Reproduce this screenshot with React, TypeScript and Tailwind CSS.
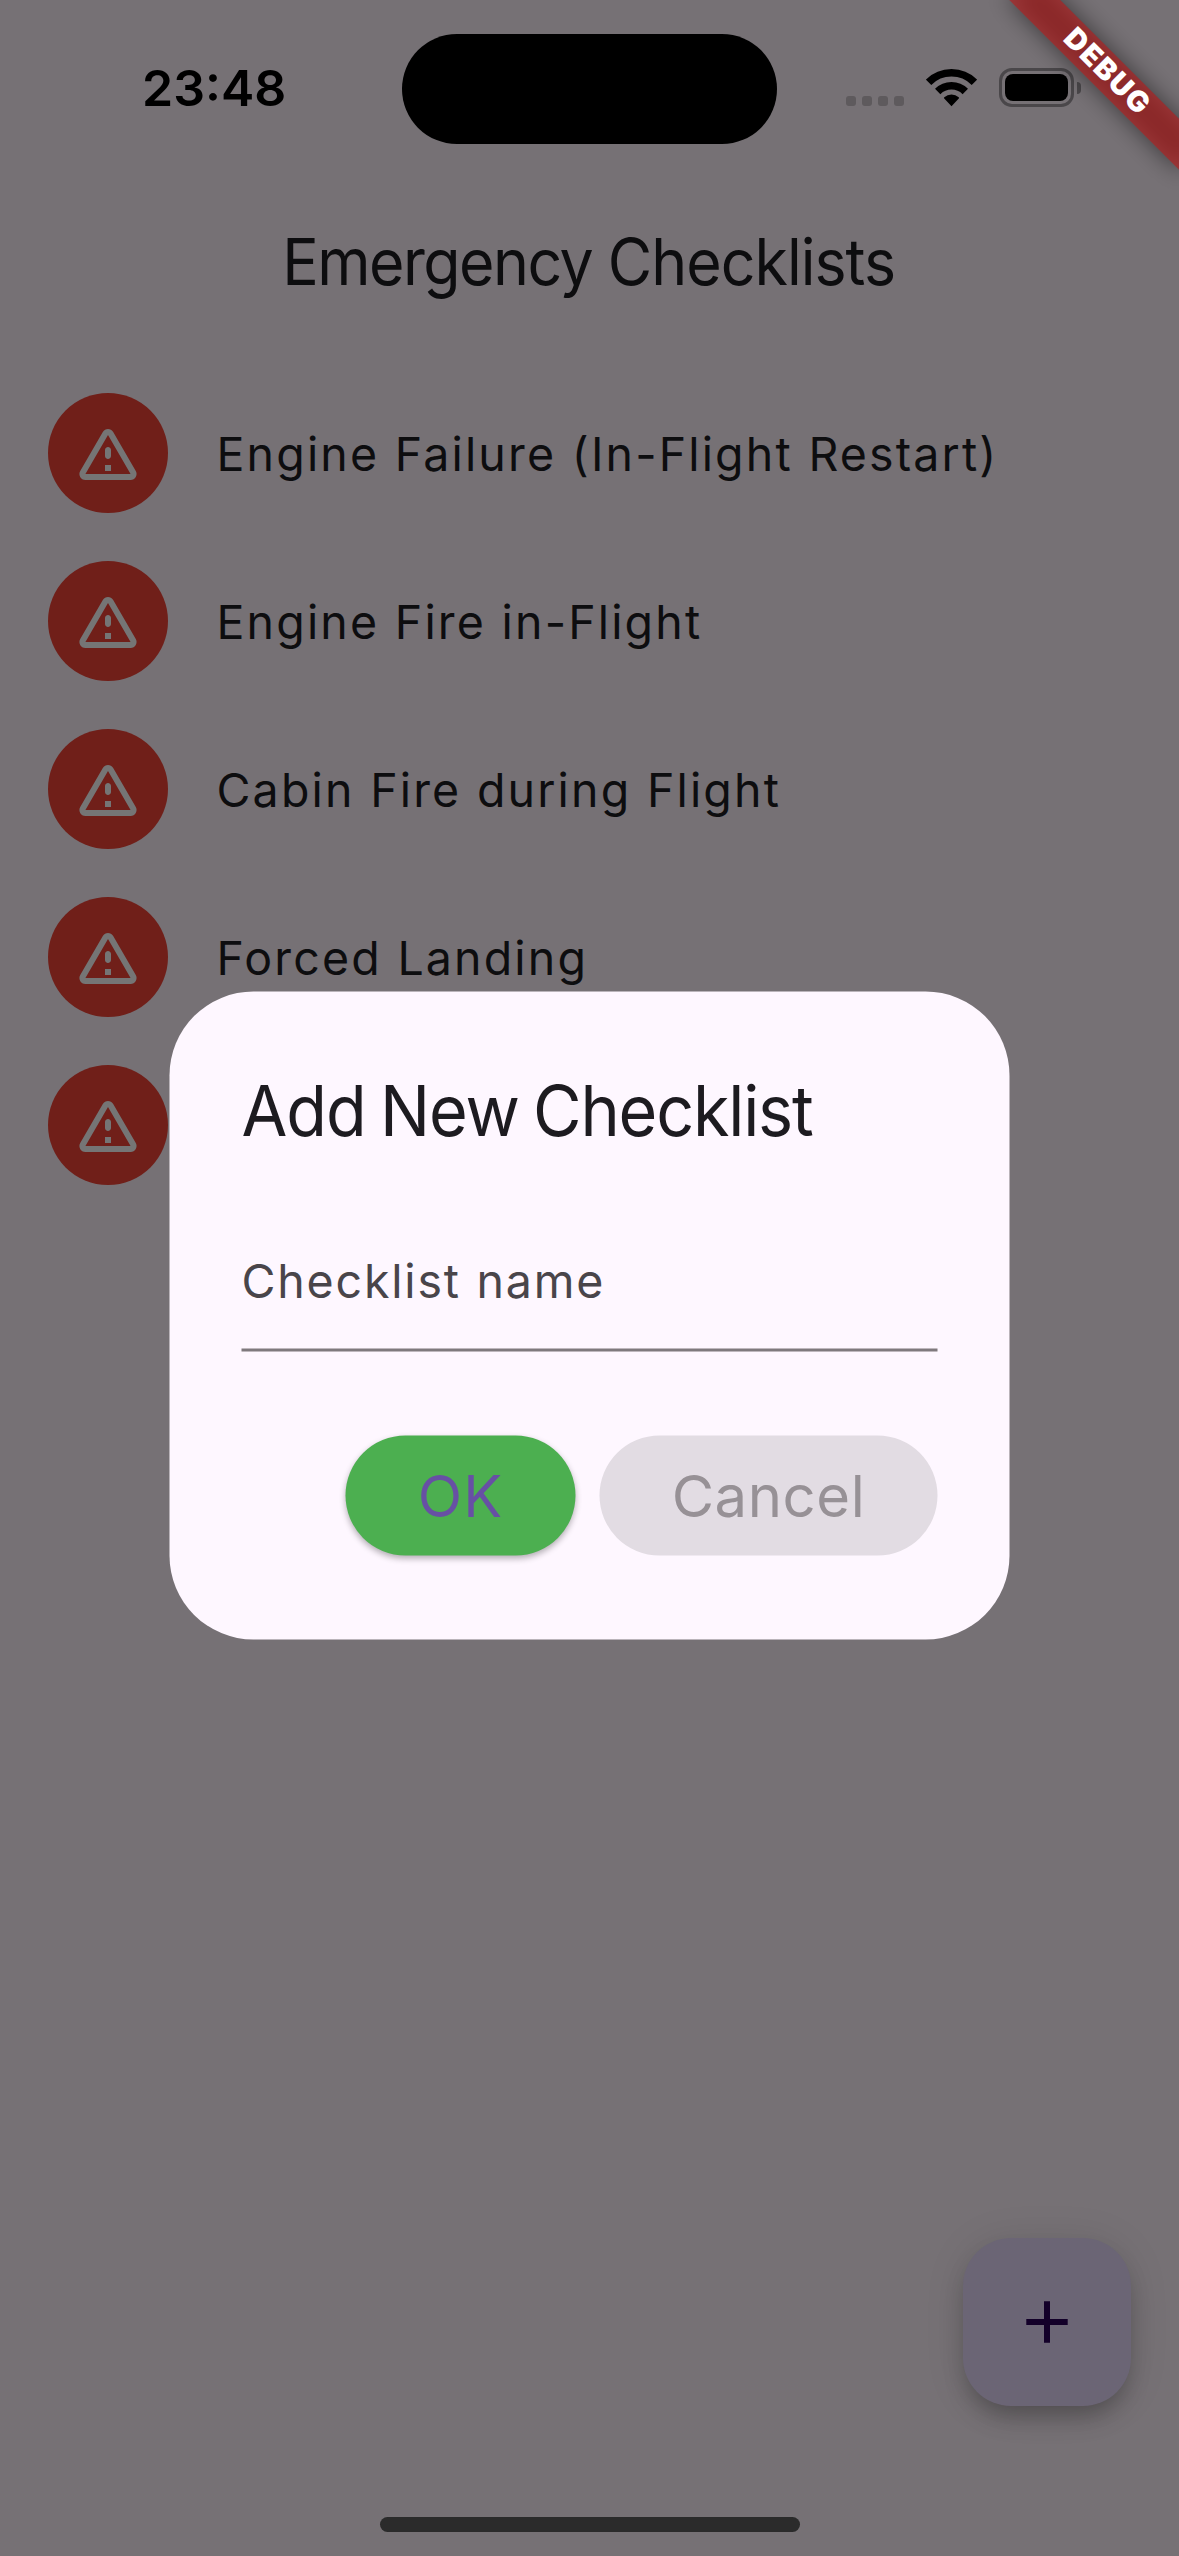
const checklists = [
  "Engine Failure (In-Flight Restart)",
  "Engine Fire in-Flight",
  "Cabin Fire during Flight",
  "Forced Landing",
  "",
];

function StatusBar() {
  return (
    <header className="flex h-[177px] shrink-0 items-start">
      <div className="w-[402px] pl-[142px] pt-[57px]">
        <span className="text-[50px] font-semibold leading-[62px] text-black">23:48</span>
      </div>
      <div className="mt-[34px] h-[110px] w-[375px] rounded-full bg-black" />
      <div className="flex items-start pl-[69px] pt-[68px]">
        <div className="flex gap-1.5 pt-7">
          {[0, 1, 2, 3].map((i) => (
            <span key={i} className="size-2.5 rounded-[3px] bg-[#5e5a5d]" />
          ))}
        </div>
        <svg className="ml-[22px] h-[39px] w-[51px]" viewBox="0 0 51 39" fill="none">
          <path d="M2.6 14.3a32.4 32.4 0 0 1 45.8 0" stroke="#000" strokeWidth="7.6" />
          <path d="M11.7 23.5a19.6 19.6 0 0 1 27.6 0" stroke="#000" strokeWidth="7.6" />
          <path d="M25.5 38.3 L18 30.2 Q17.8 29.6 18.3 29.2 a10.8 10.8 0 0 1 14.4 0 Q33.2 29.6 33 30.2 Z" fill="#000" />
        </svg>
        <div className="ml-[22px] flex items-center">
          <div className="h-[39px] w-[75px] rounded-[13px] border-[3px] border-[#4a474a] p-[3px]">
            <div className="h-full rounded-[8px] bg-black" />
          </div>
          <div className="ml-[3px] h-[12px] w-1 rounded-r-full bg-[#4a474a]" />
        </div>
      </div>
    </header>
  );
}

function WarningIcon() {
  return (
    <svg className="size-[72px]" viewBox="0 0 24 24" fill="#757575">
      <path d="M12 5.99L19.53 19H4.47L12 5.99M2.74 18c-.77 1.33.19 3 1.73 3h15.06c1.54 0 2.5-1.67 1.73-3L13.73 4.99c-.77-1.33-2.69-1.33-3.46 0L2.74 18zM11 11v2c0 .55.45 1 1 1s1-.45 1-1v-2c0-.55-.45-1-1-1s-1 .45-1 1zm0 5h2v2h-2z" />
    </svg>
  );
}

function ChecklistRow({ name }: { name: string }) {
  return (
    <li className="flex h-[168px] items-center gap-[48.5px] px-12">
      <span className="flex size-[120px] shrink-0 items-center justify-center rounded-full bg-[#701f19]">
        <WarningIcon />
      </span>
      <span className="whitespace-nowrap pt-0.5 text-[46.5px] leading-[72px] tracking-[2.15px] [word-spacing:0.4px]">
        {name}
      </span>
    </li>
  );
}

function AddButton() {
  return (
    <button className="absolute left-[963px] top-[2238px] flex size-[168px] items-center justify-center rounded-[48px] bg-[#6b6575] shadow-[0_15px_24px_-6px_rgba(0,0,0,0.28),0_3px_40px_rgba(0,0,0,0.1)]">
      <svg className="size-[72px]" viewBox="0 0 24 24" fill="#130029">
        <path d="M18.9 13H13v5.9h-2V13H5.1v-2H11V5.1h2V11h5.9v2z" />
      </svg>
    </button>
  );
}

function AddChecklistDialog() {
  return (
    <div className="absolute left-[169px] top-[991px] flex h-[648px] w-[840px] translate-x-[0.5px] translate-y-[0.5px] flex-col rounded-[84px] bg-[#fef7ff] px-[72px] pt-[72px]">
      <h2 className="h-[96px] origin-left scale-x-95 whitespace-nowrap text-[70px] leading-[94px] text-[#1d1b20]">
        <span className="tracking-[-1.1px] [word-spacing:-3.6px]">Add New </span>
        <span className="tracking-[-1.26px]">Checklist</span>
      </h2>
      <div className="mt-12 flex h-[144px] items-center border-b-[3px] border-[#7f797d] pt-1">
        <span className="text-[46.5px] leading-[72px] tracking-[1.82px] text-[#49454a] [word-spacing:0.8px]">
          Checklist name
        </span>
      </div>
      <div className="mt-[84px] flex justify-end gap-6">
        <button className="flex h-[120px] w-[230px] items-center justify-center rounded-full bg-[#4caf50] text-[58px] tracking-[1px] text-[#6750a4] shadow-[0_3px_6px_rgba(0,0,0,0.3)]">
          OK
        </button>
        <button className="flex h-[120px] w-[338px] items-center justify-center rounded-full bg-[#e2dce3] text-[58px] tracking-[0.57px] text-[#979196]">
          Cancel
        </button>
      </div>
    </div>
  );
}

function DebugBanner() {
  return (
    <div className="absolute left-[1179px] top-0 size-0 rotate-45">
      <div className="absolute left-[-120px] top-[84px] h-9 w-[240px] bg-black/50 blur-[12px]" />
      <div className="absolute left-[-120px] top-[84px] flex h-9 w-[240px] items-center justify-center bg-[#b71c1c]/63 pb-[3px]">
        <span className="text-[29px] font-black leading-none tracking-[1.6px] text-white">DEBUG</span>
      </div>
    </div>
  );
}

export default function App() {
  return (
    <div className="relative flex h-[2556px] w-[1179px] flex-col overflow-hidden bg-[#767175] font-['Inter',sans-serif] text-[#0d0d0f]">
      <StatusBar />
      <div className="flex h-[168px] shrink-0 items-center justify-center pr-px pt-0.5">
        <h1 className="scale-x-95 whitespace-nowrap text-[64px] font-normal leading-[84px]">
          <span className="tracking-[-1.58px]">Emergency </span>
          <span className="tracking-[-1px]">Checklists</span>
        </h1>
      </div>
      <ul className="flex flex-1 flex-col pt-6">
        {checklists.map((name, i) => (
          <ChecklistRow key={i} name={name} />
        ))}
      </ul>
      <AddButton />
      <div className="absolute left-[380px] top-[2517px] h-[15px] w-[420px] rounded-full bg-[#2b2b2b]" />
      <AddChecklistDialog />
      <DebugBanner />
    </div>
  );
}
